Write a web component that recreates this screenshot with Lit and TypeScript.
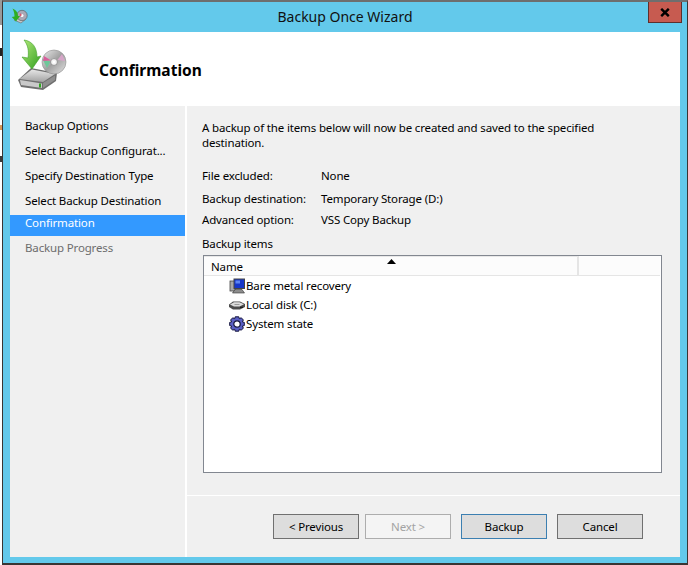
import { LitElement, css, html, svg } from "lit";
import { customElement } from "lit/decorators.js";

const steps = [
  { label: "Backup Options" },
  { label: "Select Backup Configurat..." },
  { label: "Specify Destination Type" },
  { label: "Select Backup Destination" },
  { label: "Confirmation", state: "current" },
  { label: "Backup Progress", state: "pending" },
];

const info = [
  ["File excluded:", "None"],
  ["Backup destination:", "Temporary Storage (D:)"],
  ["Advanced option:", "VSS Copy Backup"],
];

const wizardArt = svg`
  <defs>
    <linearGradient id="arrow" x1="0" y1="0" x2="1" y2="1">
      <stop offset="0" stop-color="#b4ea7a" />
      <stop offset="1" stop-color="#2f9e1e" />
    </linearGradient>
    <linearGradient id="disc" x1="0" y1="0" x2="1" y2="1">
      <stop offset="0" stop-color="#ececec" />
      <stop offset="0.5" stop-color="#a0a0a0" />
      <stop offset="1" stop-color="#e2e2e2" />
    </linearGradient>
    <linearGradient id="hdd" x1="0" y1="0" x2="0" y2="1">
      <stop offset="0" stop-color="#e6e6e6" />
      <stop offset="1" stop-color="#a3a3a3" />
    </linearGradient>
  </defs>
  <path d="M8 44 L21 32 L47 37 L46 45 L33 54 L11 51 Z" fill="#6f6f6f" />
  <path d="M9.500 43 L22 33.500 L45 38 L33 46 Z" fill="url(#hdd)" />
  <path d="M10 44 L32 47.500 L32 52 L11 49 Z" fill="#c9c9c9" />
  <path d="M33 47 L45 39.500 L45 44 L33 52 Z" fill="#8f8f8f" />
  <rect x="29" y="47.500" width="2" height="4" fill="#2fa81f" />
  <circle cx="44" cy="26" r="12" fill="url(#disc)" stroke="#8e8e8e" stroke-width="0.6" />
  <path d="M32.500 23 L40.500 25.500 L37 32 Z" fill="#6fc79a" />
  <path d="M34 20 L41 24.500 L33 25 Z" fill="#d85f9a" />
  <path d="M52 18 L47.500 24 L55 25 Z" fill="#d6a5c8" />
  <circle cx="44" cy="26" r="3.400" fill="#f4f4f4" stroke="#7a7a7a" stroke-width="0.7" />
  <circle cx="44" cy="26" r="1.200" fill="#ffffff" />
  <path
    d="M14 4 C22 5 27 11 27 21 L31 20 L22 33 L12 21 L18 22 C19 15 18 9 14 4 Z"
    fill="url(#arrow)"
    stroke="#3f9e28"
    stroke-width="0.6"
  />
`;

const smallArt = svg`
  <path d="M3 12 L8 9 L15 11 L10 15 Z" fill="#c9c9c9" stroke="#666" stroke-width="0.6" />
  <circle cx="11" cy="7.500" r="5.200" fill="#a9a9b6" stroke="#555" stroke-width="0.6" />
  <circle cx="11" cy="7.500" r="1.500" fill="#fff" />
  <path d="M9 5 L11 7 L8.500 9 Z" fill="#d9556a" />
  <path d="M1.500 0.500 C5.500 2 7 5 7 8 L9 8 L5 13.500 L0.800 9 L3.500 8.500 C3.500 6 3 3 1.500 0.500 Z" fill="#2fae22" />
`;

const bareMetalIcon = svg`
  <rect x="1" y="3" width="5" height="10" fill="#a8a8a8" stroke="#444" stroke-width="0.8" />
  <rect x="5" y="1" width="10.500" height="9.500" fill="#1636c8" stroke="#444" />
  <rect x="6.500" y="2.500" width="4.500" height="3" fill="#5d84f2" />
  <path d="M3.500 15 H15.500 L13 11.500 H6 Z" fill="#8d8d8d" stroke="#333" stroke-width="0.6" />
`;

const diskIcon = svg`
  <path d="M0 7.500 L4 4.500 H11 L16 7 V10 L11 12.500 H4 L0 10 Z" fill="#4c4c4c" />
  <path d="M1 7.500 L5 5.200 H10.500 L15 7.300 L10.500 9.500 H5 Z" fill="#dcdcdc" />
  <path d="M6 7 H10 L11 8 H5 Z" fill="#9a9a9a" />
  <rect x="11" y="9.800" width="3" height="1" fill="#111111" />
`;

const stateIcon = svg`
  <path
    d="M6.200 0.800 H9.800 L10.300 2.700 L12.300 1.800 L14.400 4 L13.300 5.800 L15.300 6.400 V9.600 L13.300 10.200 L14.400 12 L12.300 14.200 L10.300 13.300 L9.800 15.200 H6.200 L5.700 13.300 L3.700 14.200 L1.600 12 L2.700 10.200 L0.700 9.600 V6.400 L2.700 5.800 L1.600 4 L3.700 1.800 L5.700 2.700 Z"
    fill="#5a5fc4"
    stroke="#14143c"
    stroke-width="1"
  />
  <circle cx="8" cy="8" r="3.200" fill="#ffffff" stroke="#14143c" stroke-width="1.200" />
`;

const items = [
  { label: "Bare metal recovery", icon: bareMetalIcon },
  { label: "Local disk (C:)", icon: diskIcon },
  { label: "System state", icon: stateIcon },
];

@customElement("app-root")
export class AppRoot extends LitElement {
  static styles = css`
    :host {
      display: block;
      width: 688px;
      height: 565px;
      background:
        linear-gradient(#9a9a9a, #9a9a9a) 0 0 / 2px 25px no-repeat,
        linear-gradient(#222222, #222222) 0 48px / 2px 8px no-repeat,
        linear-gradient(#d79a5a, #d79a5a) 0 125px / 2px 5px no-repeat,
        linear-gradient(#3a3a3a, #3a3a3a) 0 156px / 2px 6px no-repeat,
        #ffffff;
      font-family: "Noto Sans", "Liberation Sans", sans-serif;
      font-size: 11.5px;
      letter-spacing: -0.15px;
      color: #000000;
    }

    .window {
      box-sizing: border-box;
      height: 565px;
      margin-left: 2px;
      display: flex;
      flex-direction: column;
      background: #63c9eb;
      border-left: 1px solid #3a3533;
      border-right: 1px solid #3a3533;
      border-top: 2px solid #6e6e6e;
      border-bottom: 2px solid #3a3533;
      padding: 0 7px 6px 7px;
    }

    .titlebar {
      height: 30px;
      flex: none;
      display: grid;
      grid-template-columns: 1fr auto 1fr;
      align-items: start;
    }

    .app-icon {
      display: block;
      width: 17px;
      height: 17px;
      margin: 6px 0 0 1px;
    }

    .title {
      font-size: 14px;
      letter-spacing: 0;
      line-height: 20px;
      padding-top: 5px;
      color: #111111;
    }

    .close {
      justify-self: end;
      box-sizing: border-box;
      width: 34px;
      height: 21px;
      margin-right: -2px;
      background: #c75b50;
      border: 1px solid #5e2f2c;
      border-top: none;
      display: flex;
      align-items: center;
      justify-content: center;
    }

    .close svg {
      display: block;
      width: 10px;
      height: 9px;
    }

    .banner {
      height: 74px;
      flex: none;
      background: #ffffff;
      display: flex;
      align-items: flex-start;
    }

    .banner svg {
      display: block;
      width: 60px;
      height: 60px;
      margin-top: 4px;
    }

    .heading {
      margin: 0 0 0 29px;
      padding-top: 28px;
      font-size: 15.5px;
      letter-spacing: 0;
      line-height: 20px;
      font-weight: 700;
    }

    .body {
      flex: 1;
      min-height: 0;
      display: flex;
      gap: 2px;
      background: #ffffff;
    }

    .steps {
      width: 175px;
      flex: none;
      background: #f0f0f0;
      padding-top: 8px;
      box-sizing: border-box;
    }

    .step {
      padding: 3px 0 5px 15px;
      line-height: 17px;
      white-space: nowrap;
    }

    .step.current {
      margin-top: 1px;
      padding: 0 0 6px 15px;
      line-height: 15px;
      background: #3399ff;
      color: #ffffff;
    }

    .step.pending {
      color: #6d6d6d;
    }

    .main {
      flex: 1;
      min-width: 0;
      background: #f0f0f0;
      display: flex;
      flex-direction: column;
    }

    .content {
      flex: 1;
      min-height: 0;
      padding: 14px 18px 0 15px;
      display: flex;
      flex-direction: column;
    }

    .intro {
      margin: 0;
      line-height: 15px;
      width: 430px;
    }

    .info {
      display: grid;
      grid-template-columns: 119px 1fr;
      grid-template-rows: 23px 21px 22px;
      margin-top: 17px;
      line-height: 17px;
    }

    .section {
      margin-top: 2px;
      line-height: 17px;
    }

    .list {
      box-sizing: border-box;
      height: 218px;
      margin: 3px 0 0 1px;
      background: #ffffff;
      border: 1px solid #828790;
      position: relative;
    }

    .list-head {
      box-sizing: border-box;
      height: 20px;
      background: #fcfcfc;
      border-bottom: 1px solid #e5e5e5;
      margin-right: 1px;
    }

    .col {
      box-sizing: border-box;
      width: 375px;
      height: 19px;
      border-top: 1px solid #e8e8e8;
      border-right: 2px solid #e5e5e5;
      padding-left: 7px;
      line-height: 19px;
      position: relative;
    }

    .sort {
      position: absolute;
      left: 183px;
      top: 2px;
      display: block;
      width: 9px;
      height: 5px;
    }

    .row {
      height: 19px;
      display: flex;
      align-items: center;
      gap: 1px;
      padding-left: 25px;
    }

    .row svg {
      display: block;
      width: 16px;
      height: 16px;
      flex: none;
    }

    .actions {
      flex: none;
      height: 62px;
      box-sizing: border-box;
      border-top: 1px solid #ffffff;
      padding: 18px 37px 0 0;
      display: flex;
      justify-content: flex-end;
      gap: 10px;
    }

    .btn {
      box-sizing: border-box;
      width: 86px;
      height: 25px;
      background: #dddddd;
      border: 1px solid #707070;
      font: inherit;
      letter-spacing: inherit;
      color: #000000;
      padding: 0;
    }

    .btn.next {
      margin-left: -4px;
      background: #f4f4f4;
      border-color: #adadad;
      color: #a3a3a3;
    }

    .btn.default {
      border-color: #3c7fb1;
    }
  `;

  render() {
    return html`
      <div class="window">
        <div class="titlebar">
          <svg class="app-icon" viewBox="0 0 17 17">${smallArt}</svg>
          <div class="title">Backup Once Wizard</div>
          <div class="close">
            <svg viewBox="0 0 10 9">
              <path
                d="M1.200 0.800 L8.800 8.200 M8.800 0.800 L1.200 8.200"
                stroke="#000000"
                stroke-width="2.400"
              />
            </svg>
          </div>
        </div>
        <div class="banner">
          <svg viewBox="0 0 60 60">${wizardArt}</svg>
          <h1 class="heading">Confirmation</h1>
        </div>
        <div class="body">
          <div class="steps">
            ${steps.map(
              (s) => html`<div class="step ${s.state ?? ""}">${s.label}</div>`,
            )}
          </div>
          <div class="main">
            <div class="content">
              <p class="intro">
                A backup of the items below will now be created and saved to the
                specified destination.
              </p>
              <div class="info">
                ${info.map(
                  ([k, v]) => html`<div>${k}</div><div>${v}</div>`,
                )}
              </div>
              <div class="section">Backup items</div>
              <div class="list">
                <div class="list-head">
                  <div class="col">
                    Name
                    <svg class="sort" viewBox="0 0 9 5">
                      <path d="M4.500 0 L9 5 H0 Z" fill="#000000" />
                    </svg>
                  </div>
                </div>
                ${items.map(
                  (i) => html`
                    <div class="row">
                      <svg viewBox="0 0 16 16">${i.icon}</svg>
                      <span>${i.label}</span>
                    </div>
                  `,
                )}
              </div>
            </div>
            <div class="actions">
              <button class="btn">&lt; Previous</button>
              <button class="btn next" disabled>Next &gt;</button>
              <button class="btn default">Backup</button>
              <button class="btn">Cancel</button>
            </div>
          </div>
        </div>
      </div>
    `;
  }
}

declare global {
  interface HTMLElementTagNameMap {
    "app-root": AppRoot;
  }
}
